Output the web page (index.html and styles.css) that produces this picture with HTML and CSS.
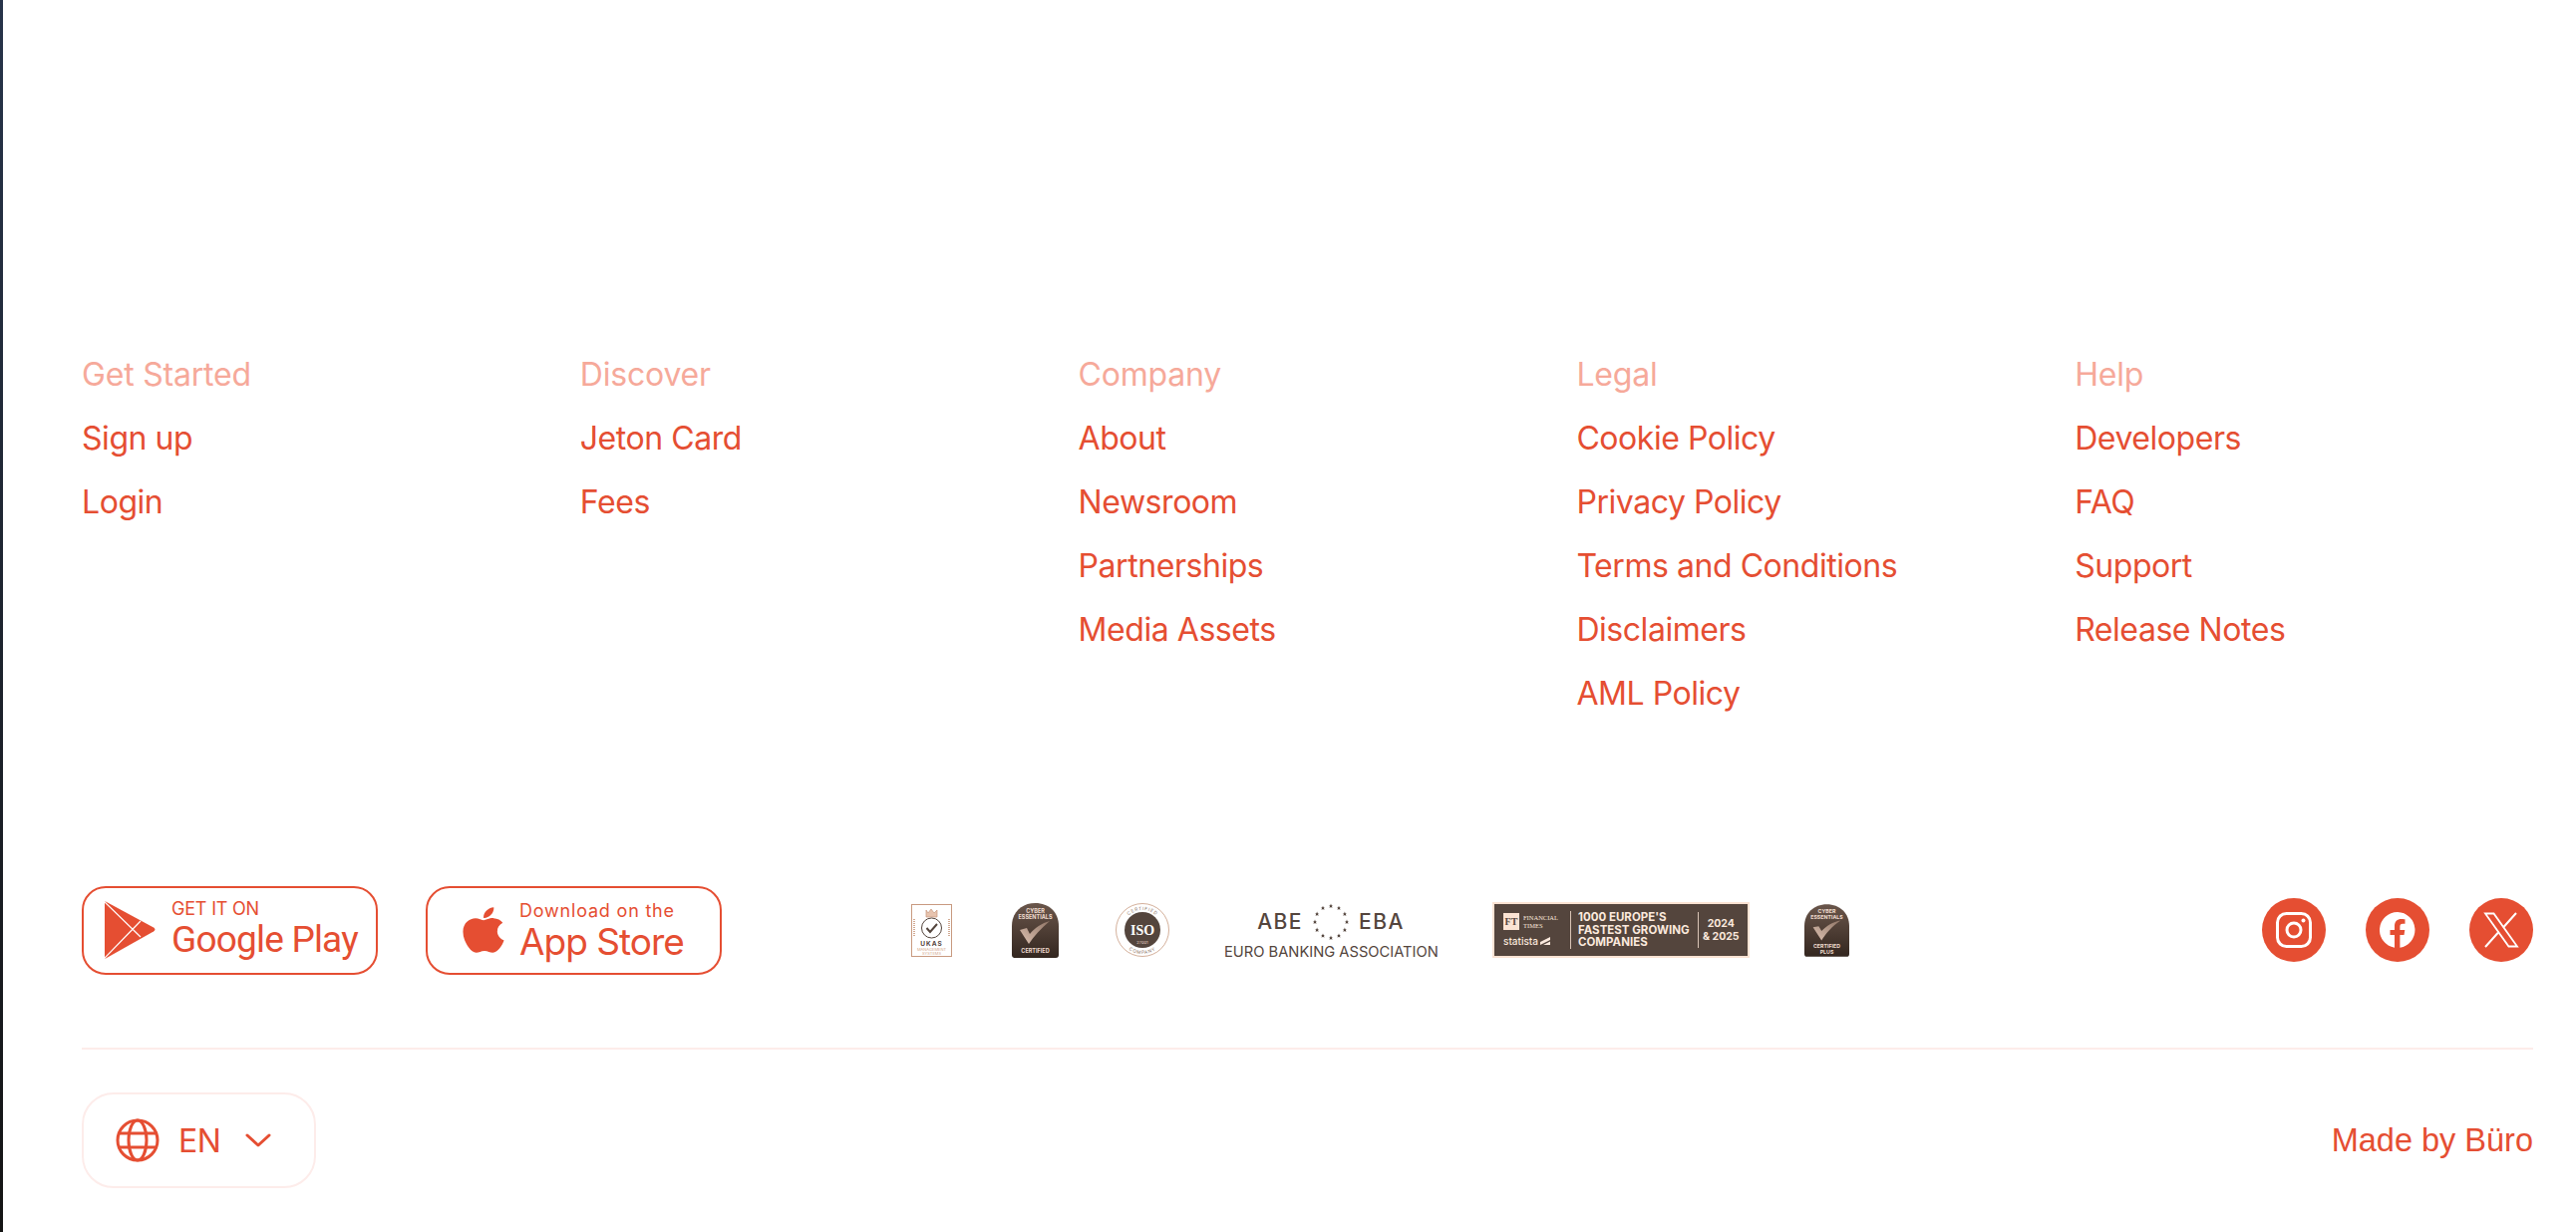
FILE: index.html
```html
<!DOCTYPE html>
<html lang="en">
<head>
<meta charset="utf-8">
<title>Footer</title>
<link rel="stylesheet" href="styles.css">
</head>
<body>
<footer class="footer">
  <nav class="cols">
    <ul class="col"><li class="head">Get Started</li><li>Sign up</li><li>Login</li></ul>
    <ul class="col"><li class="head">Discover</li><li>Jeton Card</li><li>Fees</li></ul>
    <ul class="col"><li class="head">Company</li><li>About</li><li>Newsroom</li><li>Partnerships</li><li>Media Assets</li></ul>
    <ul class="col"><li class="head">Legal</li><li>Cookie Policy</li><li>Privacy Policy</li><li>Terms and Conditions</li><li>Disclaimers</li><li>AML Policy</li></ul>
    <ul class="col"><li class="head">Help</li><li>Developers</li><li>FAQ</li><li>Support</li><li>Release Notes</li></ul>
  </nav>
  <div class="badges">
    <div class="stores">
      <a class="store gp">
        <svg class="gp-logo" viewBox="0 0 52 58" width="52" height="58"><path d="M0 1.500Q0 0 1.500 .800L49 26.500Q52 28.500 49 30.500L1.500 57.200Q0 58 0 56.500Z" fill="#e54e32"/><path d="M0 1 36 36M0 57 36 20" stroke="#fff" stroke-width="1.200" fill="none"/></svg>
        <span class="store-text"><span class="small gp-small">GET IT ON</span><span class="big gp-big">Google Play</span></span>
      </a>
      <a class="store as">
        <svg class="as-logo" viewBox="0 0 384 512" width="42" height="52" preserveAspectRatio="none"><path fill="#e54e32" d="M318.7 268.7c-.2-36.7 16.4-64.400 50-84.800-18.800-26.900-47.200-41.700-84.700-44.600-35.500-2.800-74.300 20.700-88.500 20.700-15 0-49.400-19.700-76.400-19.700C63.300 141.200 4 184.800 4 273.500q0 39.300 14.400 81.200c12.800 36.700 59 126.700 107.200 125.200 25.200-.6 43-17.900 75.800-17.900 31.800 0 48.300 17.900 76.400 17.900 48.600-.7 90.400-82.500 102.600-119.300-65.200-30.700-61.700-90-61.700-91.900zm-56.600-164.200c27.300-32.400 24.800-61.900 24-72.500-24.100 1.400-52 16.400-67.900 34.900-17.500 19.800-27.800 44.300-25.600 71.900 26.100 2 49.900-11.400 69.500-34.300z"/></svg>
        <span class="store-text"><span class="small as-small">Download on the</span><span class="big as-big">App Store</span></span>
      </a>
    </div>
    <div class="certs">
      <svg class="ukas" viewBox="0 0 41 53" width="41" height="53">
        <rect x=".5" y=".5" width="40" height="52" fill="#fff" stroke="#c89a80"/>
        <path d="M15 6l2 3 3-4 3 4 3-3v7H15z" fill="#e7c3ae" stroke="#c89a80" stroke-width=".7"/>
        <circle cx="20.500" cy="24" r="10" fill="none" stroke="#54453d" stroke-width="1"/>
        <path d="M15.500 24l3.500 4 7-8" fill="none" stroke="#54453d" stroke-width="2"/>
        <path d="M3 15v17M38 15v17" stroke="#d3ab94" stroke-width="2" stroke-dasharray="1 1"/>
        <text class="ukas-t" x="20.500" y="42" text-anchor="middle">UKAS</text>
        <text class="ukas-s" x="20.500" y="46.500" text-anchor="middle">MANAGEMENT</text>
        <text class="ukas-s" x="20.500" y="51" text-anchor="middle">SYSTEMS</text>
      </svg>
      <svg class="shield" viewBox="0 0 47 55" width="47" height="55">
        <defs>
          <linearGradient id="sg" x1="0" y1="0" x2="0" y2="1"><stop offset="0" stop-color="#6a564b"/><stop offset="1" stop-color="#33261f"/></linearGradient>
          <linearGradient id="ck" x1="1" y1="0" x2="0" y2="1"><stop offset="0" stop-color="#8f7465"/><stop offset="1" stop-color="#ddc2b2"/></linearGradient>
        </defs>
        <path d="M0 23C0 9 10 0 23.500 0S47 9 47 23V52q0 3-3 3H3q-3 0-3-3Z" fill="url(#sg)"/>
        <text class="sh-t" x="23.500" y="10" text-anchor="middle">CYBER</text>
        <text class="sh-t" x="23.500" y="16" text-anchor="middle">ESSENTIALS</text>
        <path d="M8 27l7-2 3 6C23 25 30 20 38 18 29 26 22 33 17 41Z" fill="url(#ck)"/>
        <text class="sh-t" x="23.500" y="50" text-anchor="middle">CERTIFIED</text>
      </svg>
      <svg class="iso" viewBox="0 0 54 54" width="54" height="54">
        <circle cx="27" cy="27" r="26.500" fill="#fff" stroke="#c89a80" stroke-width=".8"/>
        <circle cx="27" cy="27" r="18" fill="#54453d"/>
        <path id="isoTop" d="M7 27a20 20 0 0 1 40 0" fill="none"/>
        <path id="isoBot" d="M3 27a24 24 0 0 0 48 0" fill="none"/>
        <text class="iso-c"><textPath href="#isoTop" startOffset="50%" text-anchor="middle">CERTIFIED</textPath></text>
        <text class="iso-c"><textPath href="#isoBot" startOffset="50%" text-anchor="middle">COMPANY</textPath></text>
        <text class="iso-t" x="27" y="31.500" text-anchor="middle">ISO</text>
        <text class="iso-n" x="27" y="41" text-anchor="middle">27001</text>
      </svg>
      <div class="abe">
        <div class="abe-top"><span>ABE</span>
          <svg viewBox="0 0 38 38" width="38" height="38" fill="#54453d">
            <defs><path id="st" d="M0-2.400.6-.8 2.300-.7 1-.3 1.400 1.900 0 .9-1.400 1.900-1-.3-2.300-.7-.6-.8Z"/></defs>
            <use href="#st" x="19" y="3"/><use href="#st" x="27" y="5.100"/><use href="#st" x="32.900" y="11"/><use href="#st" x="35" y="19"/><use href="#st" x="32.900" y="27"/><use href="#st" x="27" y="32.900"/><use href="#st" x="19" y="35"/><use href="#st" x="11" y="32.900"/><use href="#st" x="5.100" y="27"/><use href="#st" x="3" y="19"/><use href="#st" x="5.100" y="11"/><use href="#st" x="11" y="5.100"/>
          </svg>
          <span>EBA</span></div>
        <div class="abe-sub">EURO BANKING ASSOCIATION</div>
      </div>
      <div class="ft">
        <div class="ft-left">
          <div class="ft-row"><span class="ft-box">FT</span><span class="ft-name">FINANCIAL<br>TIMES</span></div>
          <div class="statista">statista<svg viewBox="0 0 10 8" width="10" height="8"><path d="M0 8V5L10 0V3ZM3 8 10 4.500V8Z" fill="#fbe9dd"/></svg></div>
        </div>
        <div class="ft-title">1000 EUROPE'S<br>FASTEST GROWING<br>COMPANIES</div>
        <div class="ft-year">2024<br>&amp; 2025</div>
      </div>
      <svg class="shield" viewBox="0 0 47 55" width="45" height="55">
        <path d="M0 23C0 9 10 0 23.500 0S47 9 47 23V52q0 3-3 3H3q-3 0-3-3Z" fill="url(#sg)"/>
        <text class="sh-t" x="23.500" y="9.500" text-anchor="middle">CYBER</text>
        <text class="sh-t" x="23.500" y="15.500" text-anchor="middle">ESSENTIALS</text>
        <path d="M9 24l6-1 3 5C23 23 30 18 38 17 29 23 22 31 18 38Z" fill="url(#ck)"/>
        <text class="sh-t" x="23.500" y="46" text-anchor="middle">CERTIFIED</text>
        <text class="sh-t" x="23.500" y="52" text-anchor="middle">PLUS</text>
      </svg>
    </div>
    <div class="socials">
      <a class="soc"><svg viewBox="0 0 36 36" width="36" height="36"><rect x="1.500" y="1.500" width="33" height="33" rx="9" fill="none" stroke="#fff" stroke-width="3"/><circle cx="18" cy="18" r="7" fill="none" stroke="#fff" stroke-width="3"/><circle cx="27.500" cy="8.500" r="2" fill="#fff"/></svg></a>
      <a class="soc"><svg viewBox="0 0 36 36" width="36" height="36"><path fill="#fff" d="M18 0a18 18 0 0 0-3 35.750V23h-4.500v-5H15v-4c0-4.500 2.700-7 6.800-7 2 0 3.700.3 3.700.3v4.400h-2.200c-2.200 0-2.900 1.400-2.900 2.800V18h4.900l-.8 5h-4.100v12.750A18 18 0 0 0 18 0Z"/></svg></a>
      <a class="soc"><svg viewBox="0 0 36 36" width="36" height="36" fill="none" stroke="#fff"><path stroke-width="1.800" d="M2 1.500h8.500L34 34.500h-8.500Z"/><path stroke-width="2" d="M33 1 20 15.500M15 20.500 2 35"/></svg></a>
    </div>
  </div>
  <div class="bottom">
    <div class="lang">
      <svg viewBox="0 0 44 44" width="44" height="44" fill="none" stroke="#e54e32" stroke-width="3"><circle cx="22" cy="22" r="20"/><ellipse cx="22" cy="22" rx="9" ry="20"/><path d="M4 15h36M4 29h36"/></svg>
      <span class="lang-code">EN</span>
      <svg class="chev" viewBox="0 0 26 14" width="26" height="14" fill="none" stroke="#e54e32" stroke-width="3" stroke-linecap="round" stroke-linejoin="round"><path d="M2 2l11 10L24 2"/></svg>
    </div>
    <div class="made">Made by Büro</div>
  </div>
</footer>
</body>
</html>
```
FILE: styles.css
```css
* { box-sizing: border-box; }
html, body { margin: 0; height: 100%; background: #fff; }
body {
  border-left: 3px solid #15151c;
  border-image: linear-gradient(#27344a, #141414) 1;
  font-family: Inter, "Liberation Sans", sans-serif;
  color: #e54e32;
  overflow: hidden;
}
.footer { padding: 352px 43px 0 79px; position: relative; }
.cols { display: grid; grid-template-columns: repeat(5, 1fr); column-gap: 40px; height: 536px; }
.col { list-style: none; margin: 0; padding: 0; font-size: 32px; line-height: 48px; letter-spacing: -0.45px; font-weight: 420; }
.col li { margin-bottom: 16px; white-space: nowrap; }
.col .head { color: #f6a99a; letter-spacing: -0.2px; }
.badges { display: flex; align-items: center; justify-content: space-between; height: 90px; }
.stores { display: flex; gap: 48px; }
.store { display: flex; align-items: center; height: 89px; border: 2px solid #e54e32; border-radius: 24px; width: 297px; }
.gp { padding-left: 21px; gap: 15px; }
.as { padding-left: 35px; gap: 15px; }
.store-text { display: flex; flex-direction: column; white-space: nowrap; }
.small { font-size: 18px; line-height: 20px; }
.gp-small { letter-spacing: -0.2px; margin-top: 0; }
.as-small { letter-spacing: .8px; margin-top: 3px; }
.big { font-size: 38px; line-height: 42px; }
.gp-big { font-family: Roboto, sans-serif; font-size: 37px; letter-spacing: -0.8px; }
.as-big { font-size: 37px; letter-spacing: -1px; }
.certs { display: flex; align-items: center; position: absolute; left: 911px; }
.ukas { margin-right: 60px; }
.shield { display: block; }
.certs .iso { margin: 0 55px 0 57px; }
.abe { width: 214px; color: #54453d; text-align: center; margin-right: 55px; }
.abe-top { display: flex; justify-content: center; align-items: center; gap: 9px; font-size: 21px; letter-spacing: 1.500px; font-weight: 500; height: 44px; }
.abe-sub { font-size: 14.700px; margin-top: -1px; white-space: nowrap; }
.ft { display: flex; align-items: center; width: 258px; height: 56px; background: #54453d; border: 2px solid #fbe3d3; color: #fbe9dd; margin-right: 55px; font-weight: 700; }
.ft-left { width: 76px; padding-left: 9px; }
.ft-row { display: flex; gap: 4px; align-items: center; }
.ft-box { background: #fbe3d3; color: #54453d; font: 700 10px/17px "Liberation Serif", serif; width: 16px; text-align: center; }
.ft-name { font: 400 6.500px/7.500px "Liberation Serif", serif; }
.statista { display: flex; align-items: center; gap: 2px; font: 500 10px/12px Inter, sans-serif; margin-top: 5px; }
.ft-title { border-left: 1px solid #d9c4b6; padding-left: 7px; font-size: 11.500px; line-height: 12.500px; width: 128px; white-space: nowrap; }
.ft-year { border-left: 1px solid #d9c4b6; padding: 5px 0 5px 4px; font-size: 10.500px; line-height: 13px; text-align: center; white-space: nowrap; }
.socials { display: flex; gap: 40px; }
.soc { width: 64px; height: 64px; border-radius: 50%; background: #e54e32; display: flex; align-items: center; justify-content: center; overflow: hidden; }
.bottom { display: flex; justify-content: space-between; align-items: center; margin-top: 73px; border-top: 2px solid #fdecea; padding-top: 43px; }
.lang { width: 235px; height: 96px; border: 2px solid #fdecea; border-radius: 32px; display: flex; align-items: center; padding-left: 32px; font-size: 32px; gap: 19px; }
.lang-code { letter-spacing: -0.5px; font-weight: 420; }
.chev { margin-left: 6px; }
.made { font-family: "Liberation Sans", Arial, sans-serif; font-size: 32.500px; }
.ukas-t { font: 700 6.500px Inter, sans-serif; fill: #54453d; letter-spacing: 1px; }
.ukas-s { font: 400 4px Inter, sans-serif; fill: #d3a78c; }
.sh-t { font: 700 5.500px Inter, sans-serif; fill: #f0ddd0; }
.iso-c { font: 400 4.600px Inter, sans-serif; fill: #8a7264; letter-spacing: .8px; }
.iso-t { font: 700 14px "Liberation Serif", serif; fill: #fff; }
.iso-n { font: 400 4px Inter, sans-serif; fill: #f0ddd0; }
```
